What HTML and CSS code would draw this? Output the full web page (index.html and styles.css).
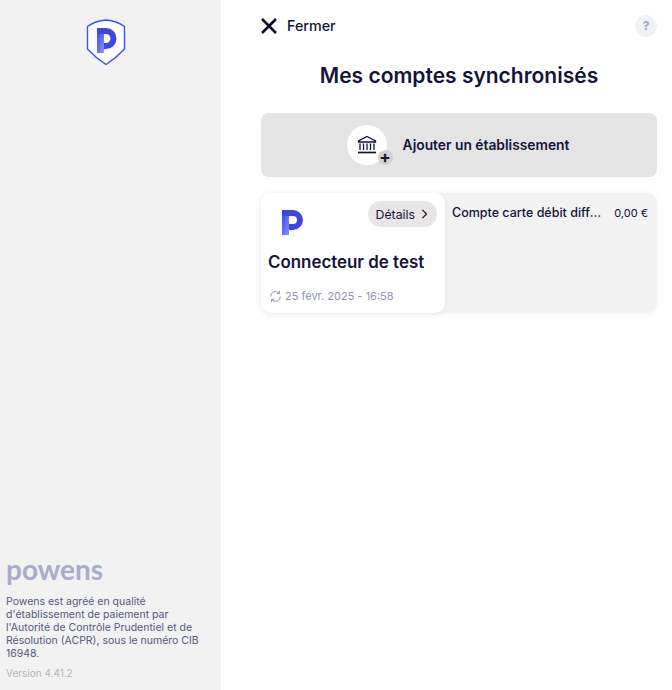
FILE: index.html
```html
<!DOCTYPE html>
<html lang="fr">
    <head>
        <title>Mes comptes synchronisés</title>
        <link rel="stylesheet" href="styles.css">
    </head>
    <body>
        <aside class="sidebar">
            <svg class="shield" viewBox="0 0 40 46" width="40" height="46">
                <defs>
                    <linearGradient id="pgrad" x1="0" y1="0" x2="1" y2="1">
                        <stop offset="0" stop-color="#3f4df0"/>
                        <stop offset="1" stop-color="#8a96fa"/>
                    </linearGradient>
                </defs>
                <path d="M20 1 C26 1.5 33 3.5 38.5 7.5 L38.5 30 C33 36 27 41 20 45.5 C13 41 7 36 1.5 30 L1.5 7.5 C7 3.5 14 1.5 20 1 Z" fill="#fff" stroke="#3d50f5" stroke-width="1.4"/>
                <path d="M11 9 H20 A10.5 10.5 0 0 1 20 30 H17 V24 H20 A4.5 4.5 0 0 0 20 15 H11 Z" fill="#3c46e0"/>
                <path d="M11 15 H18 V34 H11 Z" fill="url(#pgrad)"/>
            </svg>
            <div class="legal">
                <div class="wordmark">powens</div>
                <p class="legal-text">Powens est agréé en qualité d'établissement de paiement par l'Autorité de Contrôle Prudentiel et de Résolution (ACPR), sous le numéro CIB 16948.</p>
                <p class="version">Version 4.41.2</p>
            </div>
        </aside>
        <main class="content">
            <header class="topbar">
                <a class="close">
                    <svg viewBox="0 0 16 16" width="16" height="16">
                        <path d="M1 1 L15 15 M15 1 L1 15" stroke="#0b0b24" stroke-width="2.6" fill="none"/>
                    </svg>
                    <span class="close-label">Fermer</span>
                </a>
                <span class="help">?</span>
            </header>
            <h1 class="title">Mes comptes synchronisés</h1>
            <a class="add-bank">
                <span class="add-icon">
                    <svg viewBox="0 0 20 20" width="20" height="20">
                        <path d="M10 1.5 L18.5 6 V7 H1.5 V6 Z M3 8.5 V15 M6.5 8.5 V15 M10 8.5 V15 M13.5 8.5 V15 M17 8.5 V15" stroke="#14143a" stroke-width="1.3" fill="none"/>
                        <path d="M1 17.5 H19" stroke="#14143a" stroke-width="1.7" fill="none"/>
                    </svg>
                    <span class="plus">+</span>
                </span>
                <span>Ajouter un établissement</span>
            </a>
            <section class="connection">
                <div class="connector">
                    <div class="connector-top">
                        <svg class="connector-logo" viewBox="0 0 22 25" width="22" height="25">
                            <path d="M0 0 H11 A10 10 0 0 1 11 20 H7 V14 H11 A4 4 0 0 0 11 6 H0 Z" fill="#3c46e0"/>
                            <path d="M0 6 H7 V25 H0 Z" fill="url(#pgrad)"/>
                        </svg>
                        <a class="details">Détails
                            <svg viewBox="0 0 8 12" width="7" height="10">
                                <path d="M1.5 1 L6.5 6 L1.5 11" stroke="#14142b" stroke-width="1.5" fill="none"/>
                            </svg>
                        </a>
                    </div>
                    <h2 class="connector-name">Connecteur de test</h2>
                    <div class="sync">
                        <svg viewBox="0 0 16 16" width="13" height="13">
                            <path d="M2 8 A6 6 0 0 1 12.5 4 M14 8 A6 6 0 0 1 3.5 12" stroke="#8f94ad" stroke-width="1.2" fill="none"/>
                            <path d="M13 1 V4.5 H9.5 M3 15 V11.5 H6.5" stroke="#8f94ad" stroke-width="1.2" fill="none"/>
                        </svg>
                        <span>25 févr. 2025 - 16:58</span>
                    </div>
                </div>
                <div class="accounts">
                    <div class="account">
                        <span class="account-name">Compte carte débit différé</span>
                        <span class="account-value">0,00 €</span>
                    </div>
                </div>
            </section>
        </main>
    </body>
</html>
```

FILE: styles.css
```css
* {
    box-sizing: border-box;
}

body {
    margin: 0;
    height: 690px;
    display: flex;
    background-color: white;
    color: #14143a;
    font-family: Inter, "Noto Sans", sans-serif;
    overflow: hidden;
}

/* Left column */
.sidebar {
    width: 221px;
    flex-shrink: 0;
    display: flex;
    flex-direction: column;
    justify-content: space-between;
    align-items: center;
    padding: 19px 6px 10px 6px;
    background-color: #f2f2f2;
}

.shield {
    margin-right: 10px;
}

.legal {
    width: 100%;
}

.wordmark {
    font-family: Lato, sans-serif;
    font-size: 28px;
    font-weight: 700;
    line-height: 26px;
    color: #aaaccb;
    margin-bottom: 13px;
}

.legal-text {
    margin: 0 0 6px 0;
    font-size: 10.5px;
    line-height: 13px;
    color: #55587a;
}

.version {
    margin: 0;
    font-size: 10px;
    line-height: 14px;
    color: #b4b5c0;
}

/* Right column */
.content {
    flex: 1;
    padding: 15px 15px 0 40px;
}

.topbar {
    display: flex;
    justify-content: space-between;
    align-items: center;
    height: 22px;
}

.close {
    display: flex;
    align-items: center;
    gap: 10px;
    font-size: 14.3px;
    font-weight: 500;
}

.close-label {
    padding-bottom: 2px;
}

.help {
    width: 22px;
    height: 22px;
    border-radius: 50%;
    background-color: #f1f2f6;
    color: #a3a6bf;
    font-size: 12px;
    font-weight: 700;
    text-align: center;
    line-height: 22px;
}

.title {
    margin: 26px 0 24px 0;
    font-size: 21px;
    line-height: 26px;
    font-weight: 600;
    text-align: center;
}

.add-bank {
    display: flex;
    align-items: center;
    justify-content: center;
    gap: 16px;
    height: 64px;
    padding: 0 2px 1px 0;
    border-radius: 8px;
    background-color: #e5e4e5;
    font-size: 13.8px;
    font-weight: 600;
}

.add-icon {
    position: relative;
    width: 40px;
    height: 40px;
    border-radius: 50%;
    background-color: white;
    display: flex;
    align-items: center;
    justify-content: center;
}

.plus {
    position: absolute;
    right: -6px;
    bottom: 0;
    width: 15px;
    height: 15px;
    border-radius: 50%;
    background-color: #d3d1d1;
    color: #1c1420;
    font-size: 17px;
    font-weight: 700;
    line-height: 15px;
    text-align: center;
}

.connection {
    display: flex;
    height: 120px;
    margin-top: 16px;
    border-radius: 10px;
    background-color: #f2f2f2;
    box-shadow: 0 1px 6px rgba(0, 0, 0, 0.05);
}

.connector {
    width: 184px;
    flex-shrink: 0;
    padding: 8px 8px 0 7px;
    border-radius: 10px;
    background-color: white;
    box-shadow: 0 1px 6px rgba(0, 0, 0, 0.05);
}

.connector-top {
    display: flex;
    justify-content: space-between;
    align-items: flex-start;
}

.connector-logo {
    margin: 9px 0 0 14px;
}

.details {
    display: flex;
    align-items: center;
    gap: 6px;
    height: 26px;
    padding: 0 9px 0 8px;
    border-radius: 13px;
    background-color: #e7e5e6;
    color: #1a1230;
    font-size: 12.3px;
}

.connector-name {
    margin: 16px 0 0 0;
    font-size: 16.9px;
    line-height: 22px;
    font-weight: 600;
}

.sync {
    display: flex;
    align-items: center;
    gap: 3px;
    margin-top: 16px;
    margin-left: 1px;
    color: #8f94ad;
    font-size: 11px;
}

.accounts {
    flex: 1;
    min-width: 0;
    padding: 12px 9px 0 7px;
}

.account {
    display: flex;
    justify-content: space-between;
    align-items: center;
    gap: 10px;
}

.account-name {
    flex: 1;
    min-width: 0;
    overflow: hidden;
    white-space: nowrap;
    text-overflow: ellipsis;
    font-size: 12.5px;
    font-weight: 500;
}

.account-value {
    flex-shrink: 0;
    font-size: 11px;
}
```
